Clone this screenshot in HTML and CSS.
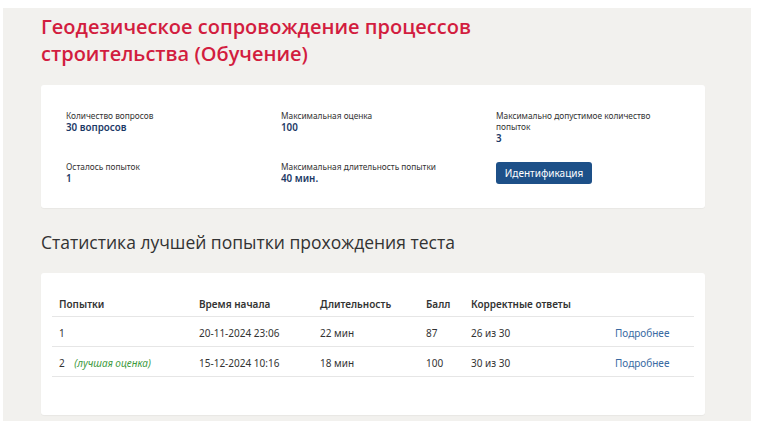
FILE: index.html
```html
<!DOCTYPE html>
<html lang="ru">
<head>
<meta charset="utf-8">
<link rel="stylesheet" href="styles.css">
</head>
<body>
<div class="panel">
  <h1 class="title">Геодезическое сопровождение процессов строительства (Обучение)</h1>
  <div class="card info">
    <div class="grid">
      <div class="item"><div class="label">Количество вопросов</div><div class="value">30 вопросов</div></div>
      <div class="item"><div class="label">Максимальная оценка</div><div class="value">100</div></div>
      <div class="item"><div class="label">Максимально допустимое количество попыток</div><div class="value">3</div></div>
      <div class="item"><div class="label">Осталось попыток</div><div class="value">1</div></div>
      <div class="item"><div class="label">Максимальная длительность попытки</div><div class="value">40 мин.</div></div>
      <div class="item"><button class="btn">Идентификация</button></div>
    </div>
  </div>
  <h2 class="subtitle">Статистика лучшей попытки прохождения теста</h2>
  <div class="card stats">
    <table class="tbl">
      <colgroup>
        <col class="c1"><col class="c2"><col class="c3"><col class="c4"><col class="c5"><col class="c6">
      </colgroup>
      <thead>
        <tr><th>Попытки</th><th>Время начала</th><th>Длительность</th><th>Балл</th><th>Корректные ответы</th><th></th></tr>
      </thead>
      <tbody>
        <tr><td>1</td><td>20-11-2024 23:06</td><td>22 мин</td><td>87</td><td>26 из 30</td><td><a class="more" href="#">Подробнее</a></td></tr>
        <tr><td>2 <span class="best">(лучшая оценка)</span></td><td>15-12-2024 10:16</td><td>18 мин</td><td>100</td><td>30 из 30</td><td><a class="more" href="#">Подробнее</a></td></tr>
      </tbody>
    </table>
  </div>
</div>
</body>
</html>
```

FILE: styles.css
```css
html, body {
  margin: 0;
  padding: 0;
  background: #ffffff;
}
body {
  font-family: "Noto Sans", "Open Sans", sans-serif;
  color: #333333;
  padding: 8px 0 0 3px;
}
.panel {
  width: 748px;
  height: 413px;
  box-sizing: border-box;
  background: #f2f1ee;
  padding: 5px 46px 0 38px;
}
.title {
  margin: 0;
  font-family: "Open Sans", "Noto Sans", sans-serif;
  font-weight: 600;
  font-size: 20px;
  line-height: 27px;
  color: #d21d3f;
  width: 560px;
}
.card {
  background: #ffffff;
  border-radius: 3px;
  box-shadow: 0 1px 1px rgba(0,0,0,0.04);
}
.info {
  margin-top: 18px;
  height: 123px;
  box-sizing: border-box;
  padding: 25px 20px 0 25px;
}
.grid {
  display: grid;
  grid-template-columns: 215px 215px 160px;
  row-gap: 15px;
}
.label {
  font-size: 8.3px;
  line-height: 11px;
  color: #333;
}
.value {
  font-size: 9.8px;
  line-height: 14px;
  font-weight: 600;
  color: #1c3966;
}
.btn {
  display: block;
  margin-top: 1px;
  height: 22px;
  width: 96px;
  padding: 0;
  border: none;
  border-radius: 3px;
  background: #1d5088;
  color: #ffffff;
  font-family: "Noto Sans", sans-serif;
  font-size: 10px;
}
.subtitle {
  margin: 22px 0 0 0;
  font-family: "Open Sans", "Noto Sans", sans-serif;
  font-weight: 400;
  font-size: 17.5px;
  line-height: 24px;
  color: #333;
}
.stats {
  margin-top: 19px;
  height: 142px;
  box-sizing: border-box;
  padding: 14px 11px 0 11px;
}
.tbl {
  width: 642px;
  table-layout: fixed;
  border-collapse: collapse;
  font-size: 10px;
}
.c1 { width: 140px; }
.c2 { width: 121px; }
.c3 { width: 106px; }
.c4 { width: 45px; }
.c5 { width: 144px; }
.c6 { width: 86px; }
.tbl th, .tbl td {
  text-align: left;
  padding: 2px 0 0 7px;
  height: 27px;
  border-bottom: 1px solid #e6e6e6;
  white-space: nowrap;
}
.tbl th {
  font-weight: 600;
  color: #333;
  vertical-align: bottom;
  padding: 0 0 5px 7px;
  height: 24px;
}
.tbl td { color: #333; }
.best {
  margin-left: 7px;
  font-style: italic;
  color: #3d9a3d;
}
.more {
  color: #3a6ba3;
  text-decoration: none;
}
```
